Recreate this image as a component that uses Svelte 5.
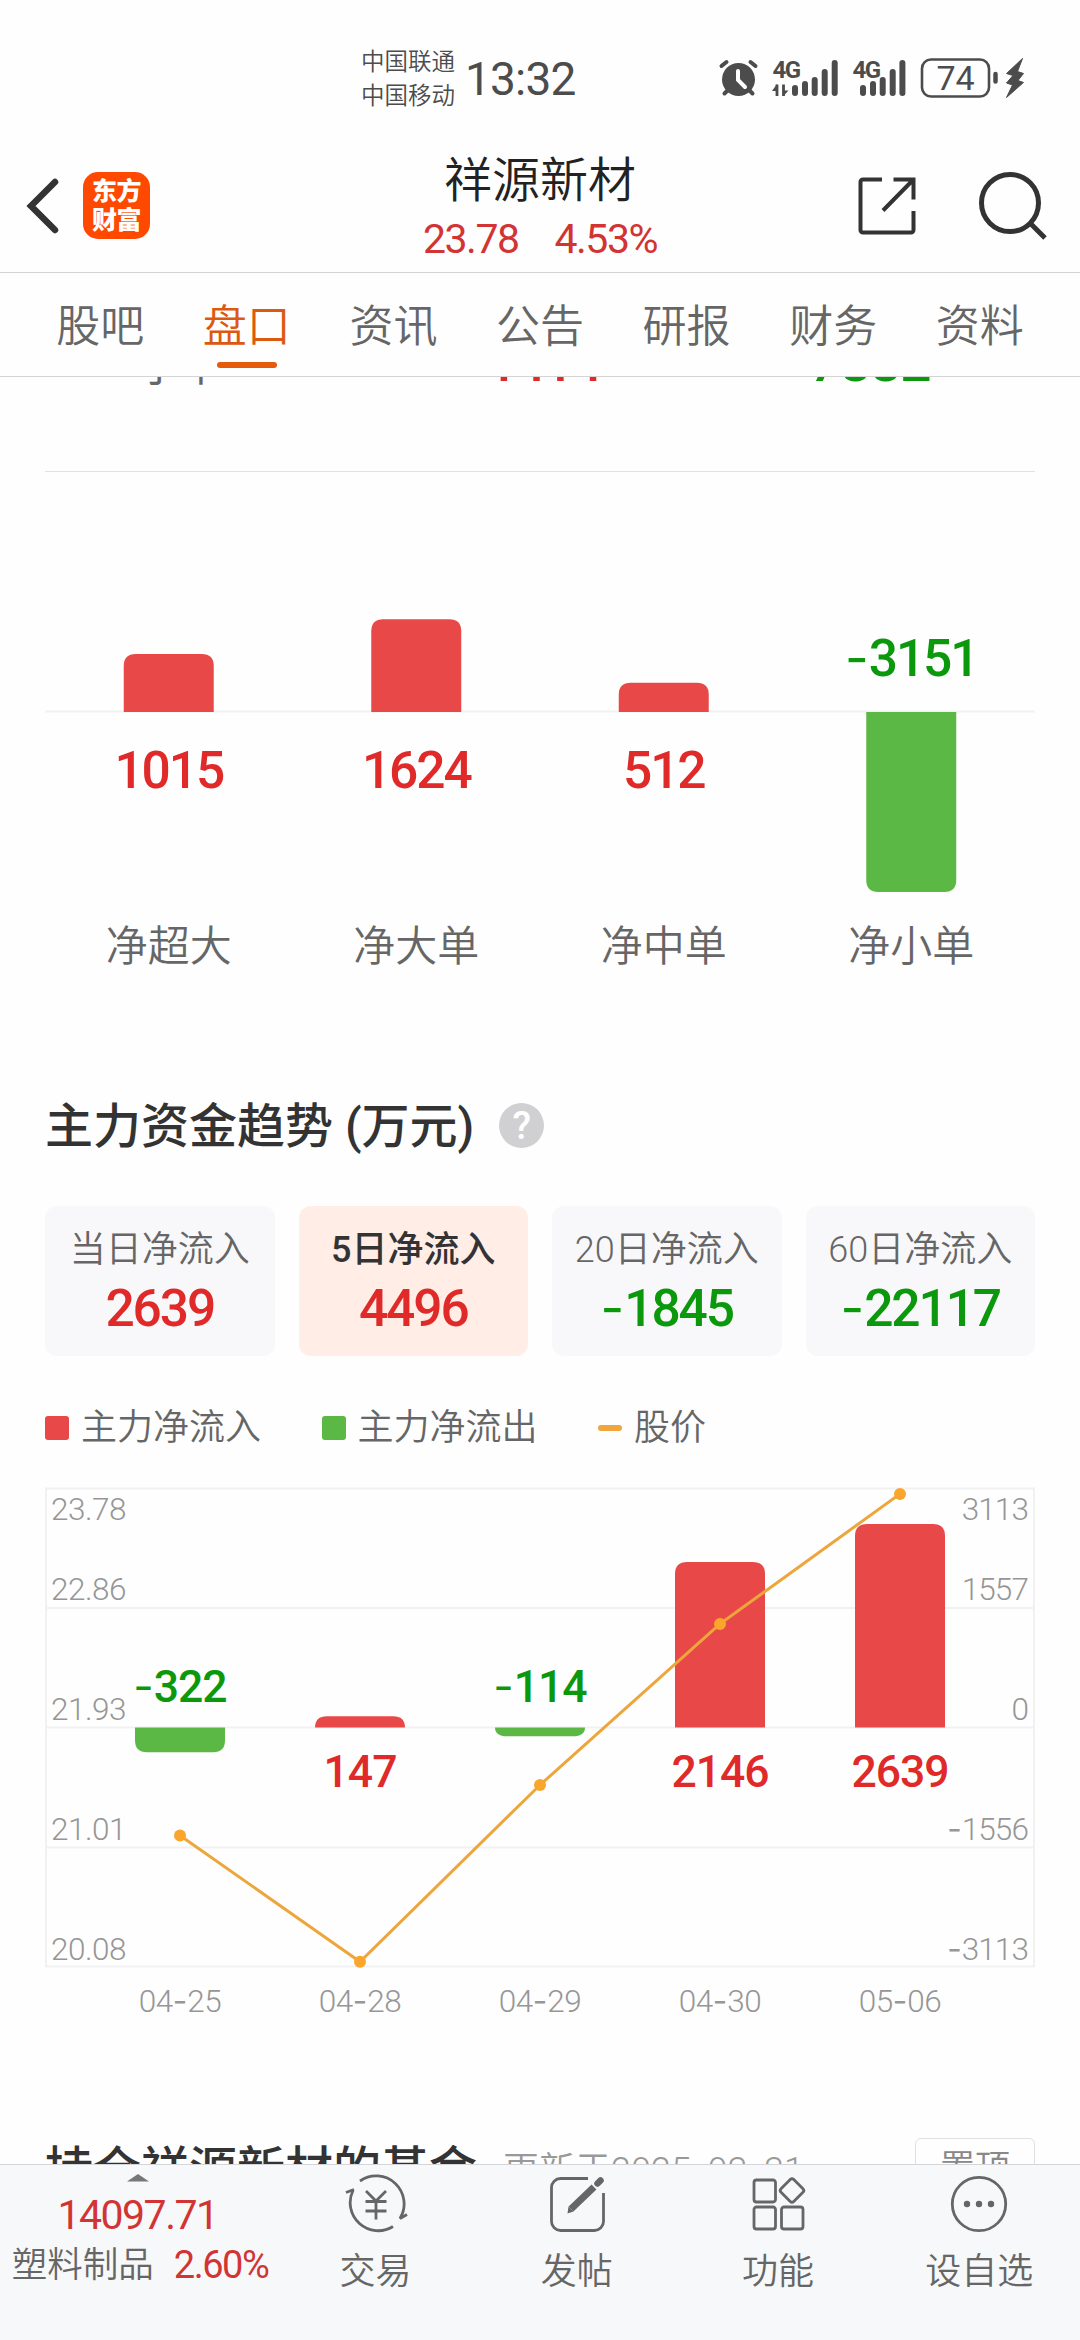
<script>
  const tabs = ['股吧', '盘口', '资讯', '公告', '研报', '财务', '资料'];
  let activeTab = $state('盘口');

  const orders = [
    { label: '净超大', value: 1015 },
    { label: '净大单', value: 1624 },
    { label: '净中单', value: 512 },
    { label: '净小单', value: -3151 }
  ];

  const periods = [
    { label: '当日净流入', value: 2639 },
    { label: '5日净流入', value: 4496 },
    { label: '20日净流入', value: -1845 },
    { label: '60日净流入', value: -22117 }
  ];
  let activePeriod = $state(1);

  const trend = [
    { date: '04-25', flow: -322, y: 348.4 },
    { date: '04-28', flow: 147, y: 474.8 },
    { date: '04-29', flow: -114, y: 298 },
    { date: '04-30', flow: 2146, y: 136.9 },
    { date: '05-06', flow: 2639, y: 6.9 }
  ];

  const axis = [
    { price: '23.78', flow: '3113', y: 33.2 },
    { price: '22.86', flow: '1557', y: 113.2 },
    { price: '21.93', flow: '0', y: 233.2 },
    { price: '21.01', flow: '-1556', y: 353.2 },
    { price: '20.08', flow: '-3113', y: 473 }
  ];

  const linePoints = trend.map((d, i) => `${135 + i * 180},${d.y}`).join(' ');

  // bar with only its outer end rounded
  function barPath(cx, zero, h) {
    const s = h > 0 ? -1 : 1;
    const len = Math.abs(h);
    const ry = Math.min(12, len);
    const end = zero + s * len;
    return `M${cx - 45} ${zero}V${end - s * ry}Q${cx - 45} ${end} ${cx - 33} ${end}H${cx + 33}Q${cx + 45} ${end} ${cx + 45} ${end - s * ry}V${zero}Z`;
  }
</script>

{#snippet num(text)}{#if text[0] === '-'}<span class="dash">-</span>{text.slice(1)}{:else}{text}{/if}{/snippet}

{#snippet svgNum(text)}{#each text.split('-') as part, i}{#if i > 0}<tspan class="dash">-</tspan>{/if}{part}{/each}{/snippet}

<div class="screen">
  <div class="status">
    <div class="carriers">
      <span>中国联通</span>
      <span>中国移动</span>
    </div>
    <span class="clock">13:32</span>
    <svg class="status-icons" width="310" height="50" viewBox="716 53 310 50">
      <g stroke="#4c4c4c" fill="none" stroke-linecap="round">
        <circle cx="738.5" cy="79.5" r="16.5" fill="#4c4c4c" stroke="none" />
        <path d="M721.5 66l5-4M755.500 66l-5-4M728 90l-3.500 3.500M749 90l3.500 3.500" stroke-width="4" />
        <path d="M738 71v9l7 7" stroke="#fff" stroke-width="4" />
        <path d="M795 88v5M805 84v9M814.700 80v13M824.700 72v21M834.700 63v30" stroke-width="6" />
        <path d="M863 88v5M873 84v9M882.700 80v13M892.700 72v21M902.400 63v30" stroke-width="6" />
        <rect x="922" y="59.500" width="67" height="37" rx="9" stroke-width="2.600" />
        <path d="M995.500 74v7.500" stroke-width="4.500" />
      </g>
      <path d="M777 84.500V96M783.500 84.500V96" stroke="#4c4c4c" stroke-width="2.800" />
      <path d="M777 84l-5 7h5zM783.500 96l5-5.500h-5z" fill="#4c4c4c" />
      <path d="M1022.500 58.500L1006.500 73.500l6.500 2-6.500 7.500 6 2-6 12.500L1023.500 82.500l-5.500-2 5.500-7-6-2z" fill="#4c4c4c" stroke="#4c4c4c" />
      <text x="772.500" y="77.500" class="net">4G</text>
      <text x="852.500" y="77.500" class="net">4G</text>
      <text x="955.500" y="90" class="level">74</text>
    </svg>
  </div>

  <header>
    <div class="left">
      <svg width="36" height="60" viewBox="0 0 36 60">
        <path d="M30 6L6 30l24 24" fill="none" stroke="#333" stroke-width="6.500" stroke-linecap="round" />
      </svg>
      <div class="logo"><span>东方</span><span>财富</span></div>
    </div>
    <div class="stock">
      <h1>祥源新材</h1>
      <p><span>23.78</span><span>4.53%</span></p>
    </div>
    <div class="right">
      <svg width="60" height="60" viewBox="0 0 60 60" fill="none" stroke="#333" stroke-width="4">
        <path d="M25 3.500H6a2.500 2.500 0 0 0-2.500 2.500v48A2.500 2.500 0 0 0 6 56.500h48a2.500 2.500 0 0 0 2.500-2.500V35" />
        <path d="M36.500 3.500h20v20M56 4L26 34.500" />
      </svg>
      <svg width="74" height="74" viewBox="0 0 74 74" fill="none" stroke="#333" stroke-width="5">
        <circle cx="34" cy="34" r="28.500" />
        <path d="M54 54l15 15" />
      </svg>
    </div>
  </header>

  <nav>
    {#each tabs as tab}
      <button class:active={tab === activeTab} onclick={() => (activeTab = tab)}>{tab}</button>
    {/each}
  </nav>

  <main>
    <div class="order-row">
      <span class="name">小单</span>
      <span class="red">1414</span>
      <span class="green">7882</span>
    </div>

    <svg class="chart orders" width="990" height="509" viewBox="0 0 990 509">
      <path d="M0 .5H990" stroke="#e2e2e2" />
      <path d="M0 240.500H990" stroke="#f2f2f2" stroke-width="2" />
      {#each orders as o, i}
        {@const cx = 123.75 + i * 247.5}
        <path d={barPath(cx, 241, (o.value / 3151) * 180)} class={o.value > 0 ? 'fill-up' : 'fill-down'} />
        <text x={cx} y={o.value > 0 ? 317 : 205} class="big {o.value > 0 ? 'red' : 'green'}">{@render svgNum(String(o.value))}</text>
        <text x={cx} y="489.500" class="order-label">{o.label}</text>
      {/each}
    </svg>

    <div class="title">
      <h2>主力资金趋势 (万元)</h2>
      <span class="help">?</span>
    </div>

    <div class="cards">
      {#each periods as p, i}
        <button class="card" class:active={i === activePeriod} onclick={() => (activePeriod = i)}>
          <span class="card-label">{p.label}</span>
          <span class="card-value {p.value > 0 ? 'red' : 'green'}">{@render num(String(p.value))}</span>
        </button>
      {/each}
    </div>

    <div class="legend">
      <span><i class="in"></i>主力净流入</span>
      <span><i class="out"></i>主力净流出</span>
      <span><i class="price"></i>股价</span>
    </div>

    <svg class="chart trend" width="990" height="540" viewBox="0 0 990 540">
      <g fill="none" stroke="#f1f1f1" stroke-width="2">
        <rect x="1" y="1.500" width="988" height="478" />
        <path d="M0 120.900H990M0 240.500H990M0 360.500H990" />
      </g>
      {#each axis as a}
        <text x="6" y={a.y} class="tick">{a.price}</text>
        <text x="983" y={a.y} class="tick end">{@render svgNum(a.flow)}</text>
      {/each}
      {#each trend as d, i}
        {@const cx = 135 + i * 180}
        <path d={barPath(cx, 240.5, (d.flow / 3113) * 240)} class={d.flow > 0 ? 'fill-up' : 'fill-down'} />
        <text x={cx} y={d.flow > 0 ? 300 : 215.2} class="mid {d.flow > 0 ? 'red' : 'green'}">{@render svgNum(String(d.flow))}</text>
        <text x={cx} y="525" class="tick date">{@render svgNum(d.date)}</text>
      {/each}
      <polyline points={linePoints} fill="none" stroke="#eda63c" stroke-width="3" />
      {#each trend as d, i}
        <circle cx={135 + i * 180} cy={d.y} r="6" fill="#faa52b" />
      {/each}
    </svg>

    <div class="title funds">
      <h2>持仓祥源新材的基金</h2>
      <span class="updated">更新于2025<span class="dash">-</span>03<span class="dash">-</span>31</span>
      <button class="pin">置顶</button>
    </div>
  </main>

  <footer>
    <div class="index">
      <svg width="22" height="8" viewBox="0 0 22 8"><path d="M0 7.500L11 0l11 7.500z" fill="#777" /></svg>
      <strong>14097.71</strong>
      <p>塑料制品<span>2.60%</span></p>
    </div>
    <button>
      <svg width="66" height="60" viewBox="-33 -30 66 60">
        <path d="M-16-23A28 28 0 0 1 24 14.500l7-4M-22-14.500l-8 3M-23-13.500A28 28 0 0 0 17 22.500" />
        <path d="M-10-13L0-3l10-10M-10.500-2.500h21M-10.500 7h21M0-3v18.500" />
      </svg>
      交易
    </button>
    <button>
      <svg width="60" height="60" viewBox="-30 -30 60 60">
        <path d="M11-25.500h-27.500a9 9 0 0 0-9 9v34a9 9 0 0 0 9 9h34a9 9 0 0 0 9-9V-11" />
        <path d="M-6 5L17-17" stroke-width="7" />
        <path d="M20.500-20.500l3-3" stroke-width="6.500" stroke-linecap="round" />
        <path d="M-8.500 2.500l5 5-6 2z" fill="#666" stroke="none" />
      </svg>
      发帖
    </button>
    <button>
      <svg width="60" height="60" viewBox="-30 -30 60 60">
        <rect x="-24" y="-24" width="21.500" height="22" rx="2.500" />
        <rect x="-24" y="3" width="21.500" height="22" rx="2.500" />
        <rect x="3.500" y="3" width="21.500" height="22" rx="2.500" />
        <rect x="5" y="-22.500" width="18" height="18" rx="2.500" transform="rotate(45 14 -13.500)" />
      </svg>
      功能
    </button>
    <button>
      <svg width="60" height="60" viewBox="-30 -30 60 60">
        <circle r="26.700" />
        <g fill="#666" stroke="none"><circle cx="-12" r="3.200" /><circle r="3.200" /><circle cx="12" r="3.200" /></g>
      </svg>
      设自选
    </button>
  </footer>
</div>

<style>
  :global(body) {
    background: #fff;
  }

  .screen {
    width: 1080px;
    height: 2340px;
    display: flex;
    flex-direction: column;
    overflow: hidden;
    background: #fefefe;
    color: #666;
    font-family: Roboto, 'Noto Sans CJK SC', sans-serif;
    font-weight: 350;
  }

  h1, h2, p {
    margin: 0;
  }

  button {
    padding: 0;
    border: 0;
    background: none;
    color: inherit;
    font: inherit;
  }

  .dash {
    font-family: Inter, sans-serif;
    font-weight: 400;
    letter-spacing: 0;
    line-height: 0;
  }

  .red { color: #e02a2a; fill: #e02a2a; }
  .green { color: #0c980c; fill: #0c980c; }
  .fill-up { fill: #e84848; }
  .fill-down { fill: #5cb844; }

  .status {
    height: 106px;
    padding-left: 361px;
    display: flex;
    align-items: center;
    box-sizing: border-box;
    color: #4c4c4c;
  }

  .carriers {
    display: flex;
    flex-direction: column;
    font-size: 23.500px;
    line-height: 34px;
    padding-top: 51px;
    height: 102px;
    width: 104px;
    box-sizing: border-box;
    justify-content: center;
  }

  .clock {
    width: 251px;
    padding-top: 50px;
    height: 102px;
    box-sizing: border-box;
    font-size: 46px;
    line-height: 54px;
    font-weight: 400;
    letter-spacing: -0.800px;
  }

  .status-icons {
    margin-top: 53px;
    align-self: flex-start;
  }

  .net {
    font-size: 24px;
    font-weight: 700;
    fill: #4c4c4c;
    letter-spacing: -1.500px;
  }

  .level {
    font-size: 34px;
    font-weight: 400;
    fill: #4c4c4c;
    text-anchor: middle;
  }

  header {
    height: 166px;
    display: grid;
    grid-template-columns: 1fr auto 1fr;
    align-items: center;
    border-bottom: 1px solid #d4d4d4;
    box-sizing: content-box;
  }

  .left {
    display: flex;
    align-items: center;
    gap: 22px;
    padding: 33px 0 0 25px;
  }

  .logo {
    width: 67px;
    height: 67px;
    border-radius: 15px;
    background: #ff4800;
    color: #fff;
    display: flex;
    flex-direction: column;
    align-items: center;
    justify-content: center;
    font-size: 25px;
    font-weight: 900;
    line-height: 29px;
    letter-spacing: -0.500px;
  }

  .stock {
    text-align: center;
    padding-top: 39px;
  }

  h1 {
    font-size: 48px;
    font-weight: 350;
    line-height: 60px;
    color: #222;
  }

  .stock p {
    display: flex;
    justify-content: center;
    gap: 36px;
    font-size: 41px;
    line-height: 56px;
    color: #d23434;
    letter-spacing: -1.500px;
    font-weight: 400;
  }

  .right {
    display: flex;
    justify-content: flex-end;
    align-items: center;
    gap: 59px;
    padding: 34px 30px 0 0;
  }

  nav {
    height: 103px;
    padding: 0 27px;
    display: flex;
    border-bottom: 1px solid #d4d4d4;
  }

  nav button {
    flex: 1;
    position: relative;
    font-size: 44px;
    line-height: 108px;
  }

  nav .active {
    color: #dc5a10;
  }

  nav .active::after {
    content: '';
    position: absolute;
    left: 50%;
    bottom: 8px;
    width: 60px;
    height: 6px;
    margin-left: -30px;
    border-radius: 3px;
    background: #e55a0d;
  }

  main {
    flex: 1;
    min-height: 0;
    overflow: hidden;
    padding: 0 45px;
    display: flex;
    flex-direction: column;
  }

  main > * {
    flex-shrink: 0;
  }

  .order-row {
    height: 144px;
    margin-top: -50px;
    display: grid;
    grid-template-columns: repeat(3, 1fr);
    align-items: baseline;
    text-align: center;
    font-size: 55px;
    line-height: 70px;
    font-weight: 500;
    letter-spacing: -1px;
  }

  .order-row .red {
    letter-spacing: -3px;
    padding-left: 6px;
  }

  .order-row .name {
    font-size: 42px;
    font-weight: 400;
    letter-spacing: 0;
    padding-right: 60px;
  }

  .chart {
    display: block;
  }

  .chart text {
    text-anchor: middle;
  }

  .chart .big {
    font-size: 51.500px;
    font-weight: 500;
    letter-spacing: -2.100px;
  }

  .chart .order-label {
    font-size: 42px;
    fill: #666;
  }

  .title {
    height: 60px;
    margin-top: 116px;
    display: flex;
    align-items: center;
  }

  h2 {
    font-size: 48px;
    font-weight: 500;
    line-height: 60px;
    padding-top: 2px;
    color: #333;
  }

  .help {
    width: 45px;
    height: 45px;
    margin-left: 25px;
    margin-bottom: 2px;
    border-radius: 50%;
    background: #d0d0d2;
    color: #fff;
    font-size: 38px;
    line-height: 46px;
    font-weight: 500;
    text-align: center;
  }

  .cards {
    margin-top: 50px;
    display: grid;
    grid-template-columns: repeat(4, 1fr);
    gap: 24px;
  }

  .card {
    height: 150px;
    border-radius: 12px;
    background: #f8f8fa;
    display: flex;
    flex-direction: column;
    align-items: center;
    padding-top: 18px;
    box-sizing: border-box;
  }

  .card.active {
    background: #ffede6;
  }

  .card-label {
    font-size: 36px;
    line-height: 52px;
    white-space: nowrap;
  }

  .card.active .card-label {
    color: #333;
    font-weight: 500;
  }

  .card-value {
    font-size: 51.500px;
    line-height: 66px;
    font-weight: 500;
    letter-spacing: -2.100px;
  }

  .legend {
    height: 40px;
    margin-top: 52px;
    display: flex;
    gap: 60.500px;
    font-size: 36px;
    line-height: 44px;
  }

  .legend span {
    display: flex;
    align-items: center;
    gap: 12px;
    height: 40px;
  }

  .legend i {
    width: 24px;
    height: 24px;
    border-radius: 3px;
  }

  .legend .in { background: #e84848; }
  .legend .out { background: #5cb844; }

  .legend .price {
    height: 6px;
    background: #f0a63a;
  }

  .trend {
    margin-top: 39px;
  }

  .chart .tick {
    font-size: 31.500px;
    fill: #969696;
    letter-spacing: -0.500px;
    text-anchor: start;
  }

  .chart .tick.end {
    text-anchor: end;
    letter-spacing: -0.900px;
  }

  .chart .tick.date { text-anchor: middle; }

  .chart .mid {
    font-size: 44.500px;
    font-weight: 500;
    letter-spacing: -1px;
  }

  .funds {
    margin-top: 111px;
    align-items: flex-start;
  }

  .updated {
    margin-left: 26px;
    font-size: 36px;
    line-height: 66px;
    color: #999;
  }

  .pin {
    width: 120px;
    height: 60px;
    margin-left: auto;
    border: 1px solid #e0e0e0;
    border-radius: 6px;
    box-sizing: border-box;
    font-size: 35px;
    line-height: 60px;
    color: #888;
  }

  footer {
    height: 176px;
    border-top: 1px solid #d3d5d8;
    box-sizing: border-box;
    background: #f7f8fa;
    display: grid;
    grid-template-columns: 275px repeat(4, 1fr);
    font-size: 36px;
  }

  footer button {
    display: flex;
    flex-direction: column;
    align-items: center;
    padding-top: 9px;
    line-height: 52px;
    gap: 12px;
  }

  footer button svg {
    fill: none;
    stroke: #666;
    stroke-width: 2.800;
  }

  .index {
    display: flex;
    flex-direction: column;
    align-items: center;
    padding-top: 9px;
  }

  .index strong {
    margin-top: 8px;
    font-size: 41px;
    line-height: 50px;
    font-weight: 400;
    color: #d23434;
    letter-spacing: -1.500px;
  }

  .index p {
    display: flex;
    gap: 20px;
    font-size: 35.500px;
    line-height: 50px;
    padding-left: 5px;
    white-space: nowrap;
  }

  .index p span {
    font-size: 38px;
    font-weight: 400;
    color: #d23434;
    letter-spacing: -1.500px;
  }
</style>
